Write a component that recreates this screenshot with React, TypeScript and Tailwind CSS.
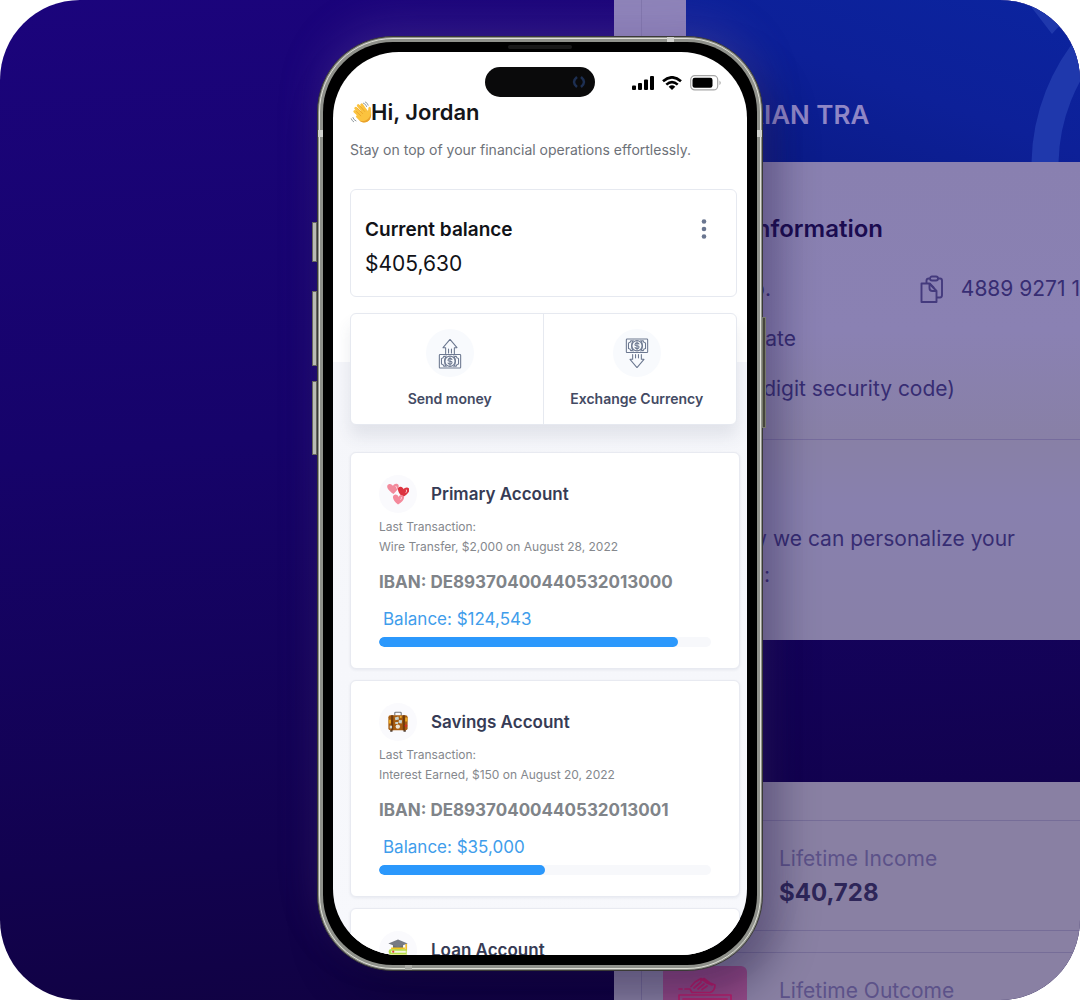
import React from "react";

function WaveIcon() {
  return (
    <svg viewBox="0 0 24 24" className="size-[23px] shrink-0" aria-hidden="true">
      <g fill="none" stroke="#8b959c" strokeWidth="1" strokeLinecap="round">
        <path d="M14 2.200q2.600.8 3.400 3.600M16 1q2.400 1 3 3.400M3 17.200q.8 2.600 3.200 3.600M1.300 18.600q.7 2.200 2.500 3.100" />
      </g>
      <path d="M6 7.500L12.800 14.500M8.600 4.800L14.800 12M12.200 4L16.800 10.500M5 11L11.500 17" stroke="#fbc33f" strokeWidth="3" strokeLinecap="round" />
      <path d="M10 10.500L16.500 8.500Q18.500 11 19 9.500C19 7 19.800 5.800 20.900 6.200C22.200 6.700 21.700 8.500 22 11.500C22.800 17.500 20.300 21.500 16 22.300C11.500 23 9 19.500 6 16.500Z" fill="#fbc33f" />
      <path d="M7.500 7.300L13.200 13.200M10.400 5.200L15.300 10.900M6.200 10.500L11.300 15.500" stroke="#e59a24" strokeWidth=".7" strokeLinecap="round" />
      <path d="M21.900 12.500C22.400 18 20 21.500 16 22.300C13 22.800 11 21.500 9.400 20C15 22.500 20.500 19.500 21.900 12.500Z" fill="#e9a12b" />
    </svg>
  );
}

const heart = "M0 2.800C-5-1-5-4-2.800-4.500C-1.400-4.800-.3-3.800 0-3C.3-3.800 1.400-4.800 2.800-4.500C5-4 5-1 0 2.800Z";

function HeartsIcon() {
  return (
    <svg viewBox="0 0 24 24" className="size-[22px]" aria-hidden="true">
      <path d={heart} transform="translate(6.800 7.800) rotate(-4) scale(1.500)" fill="#f28a9c" />
      <path d={heart} transform="translate(17.600 11.300) rotate(8) scale(1.500)" fill="#dc3440" />
      <path d={heart} transform="translate(12.300 19.500) rotate(4) scale(1.450)" fill="#f4899b" />
      <path d="M9.800 3.600q1 .7.700 2M21.300 7.600q.7 1.200-.5 2.700M15.800 15.600q.5 1-.7 2.300" fill="none" stroke="#ffe2e6" strokeWidth=".9" strokeLinecap="round" />
    </svg>
  );
}

function SuitcaseIcon() {
  return (
    <svg viewBox="0 0 24 24" className="size-[22px]" aria-hidden="true">
      <path d="M8.500 5V2.200Q8.500 1.300 9.500 1.300H14.500Q15.500 1.300 15.500 2.200V5" fill="none" stroke="#77787c" strokeWidth="1.200" />
      <path d="M3.500 20h2.500v2.700H3.500zM18 20h2.500v2.700H18z" fill="#4e4038" />
      <rect x="1.500" y="4.500" width="21" height="16.500" rx="2.200" fill="#a85d10" />
      <path d="M4.500 4.500h2.300V21H4.500zM17.200 4.500h2.300V21h-2.300z" fill="#6f3b0d" />
      <path d="M2 9.500h2.300v4H2zM19.800 7h2.400v4.500h-2.400z" fill="#eda923" />
      <path d="M8.500 7l4-1 .6 3.200-4 1zM13 9.800l3.500.3-.5 3.500-3.500-.5zM9 12h3v2.300H9z" fill="#c9d3cc" />
      <circle cx="11.800" cy="17" r="2.400" fill="#eee6d7" />
      <path d="M3 16h2.500v3H3z" fill="#cdd6d2" />
      <circle cx="20.700" cy="16" r="1.400" fill="#d52f25" />
      <path d="M14 5.500h2v2h-2z" fill="#f0ad27" />
    </svg>
  );
}

function GraduationIcon() {
  return (
    <svg viewBox="0 0 24 24" className="size-[22px]" aria-hidden="true">
      <path d="M6.500 5.500h11v5q-5.500 2-11 0z" fill="#6a6e76" />
      <path d="M12 .5L22.500 5L12 9L1.500 5Z" fill="#777b83" />
      <path d="M20 5.500h1.900v7.200H20z" fill="#f1bc31" />
      <path d="M4.500 9.200h15v2.300H4.500z" fill="#f1c51f" />
      <path d="M3 11.200h18.500v5.300H3q-2.500-2.600 0-5.300z" fill="#b4dd45" />
      <path d="M4.500 12.800h16v2.200h-16z" fill="#f4f5df" />
      <circle cx="6.800" cy="13.800" r="1.200" fill="#e24336" />
      <path d="M2 16.800h20v6H2z" fill="#d8e03a" />
    </svg>
  );
}

function MoneyIcon({ direction }: { direction: "up" | "down" }) {
  const up = direction === "up";
  return (
    <svg viewBox="0 0 24 32" className="h-[31px] w-6" fill="none" stroke="#6c7890" strokeWidth="1.100" strokeLinejoin="round" strokeLinecap="round" aria-hidden="true">
      <g transform={up ? "translate(0 17)" : "translate(0 1)"}>
        <rect x="1" y="0" width="22" height="14" rx=".8" />
        <path d="M7 2H5.500Q5.300 4 3.200 4.200V9.800Q5.300 10 5.500 12H7M17 2h1.500Q18.700 4 20.800 4.200V9.800Q18.700 10 18.500 12H17" />
        <path d="M8 1.500Q4.800 7 8 12.500M16 1.500Q19.200 7 16 12.500" />
        <circle cx="12" cy="7" r="5.300" />
        <path d="M14 5.200Q13.600 4 12 4T10 5.500T12 7T14 8.600T12 10T10 8.800M12 3V11" />
      </g>
      <path d={up ? "M7.500 16V10H4.800L12 1.500L19.200 10H16.500V16M10.500 11.500V15.500M13.500 11.500V15.500" : "M7.500 17V22H4.800L12 30.500L19.200 22H16.500V17M10.500 17V20.500M13.500 17V20.500"} />
    </svg>
  );
}

function CopyIcon() {
  return (
    <svg viewBox="0 0 24 28" className="h-7 w-6 shrink-0" fill="none" stroke="#443a7d" strokeWidth="1.900" strokeLinejoin="round" aria-hidden="true">
      <path d="M6.500 8V5.500Q6.500 3.500 9 3.500H9.500M18 3.500H20Q22 3.500 22 5.500V20Q22 22.500 20 22.500H17" />
      <rect x="10" y="1.500" width="8" height="4" rx="2" />
      <path d="M1.500 8.500H9.500L16.500 16V27H1.500Z" />
      <path d="M9.500 8.500V13Q9.500 16 12.500 16H16.500M9.500 8.500L14 13" />
    </svg>
  );
}

function HandCashIcon() {
  return (
    <svg viewBox="0 0 54 30" className="h-[30px] w-[54px]" fill="none" stroke="#ba1f6b" strokeWidth="1.700" strokeLinejoin="round" strokeLinecap="round" aria-hidden="true">
      <path d="M1 12H4M7 12H12L14 15.500H32Q37 14 37 8L32 6L26 1.500L23 3.500M13 9.500L17 5L23 1.500L29 6L34 8M16 11L23 5M20 12L26 7M24 12.500L29 9" />
      <path d="M1 18H53V29H1ZM5 22H49" />
    </svg>
  );
}

type Account = { name: string; last?: string; iban?: string; balance?: string; used?: number; icon: React.ReactNode };

const accounts: Account[] = [
  { name: "Primary Account", last: "Wire Transfer, $2,000 on August 28, 2022", iban: "DE89370400440532013000", balance: "$124,543", used: 90, icon: <HeartsIcon /> },
  { name: "Savings Account", last: "Interest Earned, $150 on August 20, 2022", iban: "DE89370400440532013001", balance: "$35,000", used: 50, icon: <SuitcaseIcon /> },
  { name: "Loan Account", icon: <GraduationIcon /> },
];

function AccountCard({ account }: { account: Account }) {
  return (
    <article className="shrink-0 rounded-md border border-[#e8eaf1] bg-white px-7 pt-[22px] pb-[21px] shadow-[0_1px_3px_rgba(40,50,90,0.08)]">
      <header className="flex items-center gap-3.5">
        <span className="flex size-[38px] items-center justify-center rounded-full bg-[#fafafd]">{account.icon}</span>
        <h2 className="text-[17px] leading-9 font-semibold text-[#363b55]">{account.name}</h2>
      </header>
      {account.iban && (
        <>
          <p className="mt-1 text-xs leading-5 text-[#85888d]">
            Last Transaction:
            <br />
            {account.last}
          </p>
          <p className="mt-[13px] text-[17px] leading-6 font-bold text-[#808489]">IBAN: {account.iban}</p>
          <p className="mt-[13px] pl-1 text-[17px] leading-6 text-[#409deb]">Balance: {account.balance}</p>
          <div role="progressbar" aria-label={account.name} aria-valuenow={account.used} className="mt-1.5 h-2.5 overflow-hidden rounded-full bg-[#f7f8fb]">
            <div className="h-full rounded-full bg-[#2b98fc]" style={{ width: `${account.used}%` }} />
          </div>
        </>
      )}
    </article>
  );
}

function StatusBar() {
  return (
    <div className="grid shrink-0 grid-cols-[1fr_110px_1fr] items-center">
      <span />
      <div className="flex h-[30px] items-center justify-end rounded-full bg-[#0a0a0b] pr-2">
        <svg viewBox="0 0 16 16" className="size-4" fill="none" stroke="#1d2f52" strokeWidth="2.500" aria-hidden="true">
          <path d="M6 3Q0 8 6 13M10 3Q16 8 10 13" />
        </svg>
      </div>
      <div className="flex items-center justify-end gap-2 pt-0.5 pr-[25px]">
        <svg viewBox="0 0 22 14" className="h-3.5 w-[22px]" aria-hidden="true">
          <rect x="0" y="9.500" width="4" height="4.500" rx="1" />
          <rect x="6" y="7" width="4" height="7" rx="1" />
          <rect x="12" y="3.500" width="4" height="10.500" rx="1" />
          <rect x="18" y="0" width="4" height="14" rx="1" />
        </svg>
        <svg viewBox="0 0 20 14" className="h-3.5 w-5" fill="none" stroke="#000" strokeWidth="2.600" aria-hidden="true">
          <path d="M1 5.300Q10-2.700 19 5.300M4.300 8.600Q10 3.500 15.700 8.600" />
          <path d="M6.700 10.700Q10 8 13.300 10.700L10 14Z" fill="#000" stroke="none" />
        </svg>
        <svg viewBox="0 0 32 16" className="h-4 w-8" aria-hidden="true">
          <rect x=".7" y=".7" width="27" height="14.200" rx="4" fill="none" stroke="#a6a6a6" strokeWidth="1.200" />
          <rect x="2.500" y="2.800" width="20" height="10" rx="2.200" />
          <path d="M29.500 5.500Q32 7.800 29.500 10.300Z" fill="#a6a6a6" />
        </svg>
      </div>
    </div>
  );
}

function Phone() {
  return (
    <main className="relative z-10 mx-auto flex h-full w-full max-w-[446px] flex-col rounded-[76px] border border-[#3a3a36] bg-[#8f918b] p-[5px] shadow-[0_-16px_44px_-6px_rgba(130,105,180,0.26),14px_24px_40px_rgba(10,0,40,0.35)] [grid-area:1/1]">
      <div className="absolute top-[185px] -left-1.5 h-10 w-[5px] border border-[#66665f] bg-[#b9bbb4]" />
      <div className="absolute top-[254px] -left-1.5 h-[75px] w-[5px] border border-[#66665f] bg-[#b9bbb4]" />
      <div className="absolute top-[344px] -left-1.5 h-[74px] w-[5px] border border-[#66665f] bg-[#b9bbb4]" />
      <div className="absolute top-[280px] -right-1 h-[111px] w-1 border border-[#77796c] bg-[#45453c]" />
      <div className="pointer-events-none absolute inset-px rounded-[74px] border border-[#e0e1d8]" />
      <div className="absolute top-[93px] left-0 h-[7px] w-[5px] bg-[#d0d1cd]" />
      <div className="absolute top-[93px] right-0 h-[7px] w-[5px] bg-[#d0d1cd]" />
      <div className="absolute top-0 right-[88px] h-[5px] w-[7px] bg-[#d0d1cd]" />
      <div className="absolute bottom-0 left-[87px] h-[5px] w-[7px] bg-[#a9aaa4]" />
      <div className="relative flex min-h-0 flex-1 flex-col rounded-[70px] bg-black px-2.5 pt-2.5 pb-2.5">
        <div className="absolute top-[3px] left-1/2 h-1 w-16 -translate-x-1/2 rounded-full bg-[#191919]" />
        <div className="flex min-h-0 flex-1 flex-col overflow-hidden rounded-[66px] bg-[linear-gradient(to_bottom,#ffffff_0,#ffffff_310px,#f5f6fa_310px,#f7f8fc_100%)] pt-[15px]">
          <StatusBar />
          <div className="px-[17px]">
            <h1 className="flex h-[30px] items-center text-[22px] font-semibold text-[#141519]">
              <span className="w-[21px]"><WaveIcon /></span>
              Hi, Jordan
            </h1>
            <p className="mt-[13px] text-sm leading-5 text-[#6d7178]">Stay on top of your financial operations effortlessly.</p>
          </div>
          <section className="mt-[29px] mr-2.5 ml-[17px] flex shrink-0 items-start justify-between rounded-md border border-[#e6e9f0] bg-white px-3.5 pt-6 pb-3.5">
            <div className="text-[#111217]">
              <h2 className="text-[19px] leading-8 font-semibold">Current balance</h2>
              <p className="text-[21px] leading-9">$405,630</p>
            </div>
            <button type="button" aria-label="Balance options" className="px-1.5 pt-[5px]">
              <svg viewBox="0 0 24 20" className="h-5 w-6" fill="#6a7690" aria-hidden="true">
                <circle cx="12" cy="2.500" r="2.300" />
                <circle cx="12" cy="10" r="2.300" />
                <circle cx="12" cy="17.500" r="2.300" />
              </svg>
            </button>
          </section>
          <section className="mt-4 mr-2.5 ml-[17px] grid shrink-0 grid-cols-2 divide-x divide-[#e6e9f0] rounded-md border border-[#e6e9f0] bg-white shadow-[0_12px_16px_rgba(60,70,100,0.1)]">
            <button type="button" className="flex flex-col items-center gap-2.5 pt-[15px] pb-[13px] pl-1.5 text-sm leading-6 font-semibold text-[#434a63]">
              <span className="flex size-12 items-center justify-center rounded-full bg-[#f8fafd]">
                <MoneyIcon direction="up" />
              </span>
              Send money
            </button>
            <button type="button" className="flex flex-col items-center gap-2.5 pt-[15px] pr-1.5 pb-[13px] text-sm leading-6 font-semibold text-[#434a63]">
              <span className="flex size-12 items-center justify-center rounded-full bg-[#f8fafd]">
                <MoneyIcon direction="down" />
              </span>
              Exchange Currency
            </button>
          </section>
          <section className="mt-[27px] mr-[7px] ml-[17px] flex flex-col gap-[11px]">
            {accounts.map((account) => (
              <AccountCard key={account.name} account={account} />
            ))}
          </section>
        </div>
      </div>
    </main>
  );
}

function Backdrop() {
  return (
    <aside className="-mt-9 -mb-[29px] ml-auto flex w-[466px] max-w-full flex-col overflow-hidden text-[#372d73] [grid-area:1/1]">
      <div className="flex h-[162px] shrink-0 bg-[#8e84b9]">
        <div className="w-7 border-r border-[#8177ac]" />
        <div className="relative ml-11 flex flex-1 items-start overflow-hidden bg-[linear-gradient(200deg,#0b249f,#0d2098_50%,#0a1a85)] pt-[97px] pl-[61px]">
          <svg viewBox="0 0 80 162" className="absolute top-0 right-0 h-full w-20" aria-hidden="true">
            <circle cx="235" cy="166" r="190" fill="none" stroke="#1f38ac" strokeWidth="27" />
            <path d="M32 8L52 34Q60 24 72 17V0H32Z" fill="#1f38ac" />
          </svg>
          <p className="text-[26px] leading-9 font-semibold text-[#8f86c6]">RIAN TRA</p>
        </div>
      </div>
      <div className="flex h-[478px] shrink-0 flex-col bg-[linear-gradient(to_bottom,#8980b0,#8a81b3_35%,#8880a6_58%,#8880ae_72%,#8880a8)] text-[21px]">
        <h2 className="mt-[47px] pr-[197px] text-right text-2xl leading-10 font-semibold text-[#1b0c50]">Information</h2>
        <div className="mt-5 flex h-10 items-center">
          <span className="w-[157px] text-right">No.</span>
          <span className="ml-auto flex items-center gap-[17px] whitespace-nowrap"><CopyIcon />4889 9271 1</span>
        </div>
        <p className="mt-2.5 pr-[284px] text-right leading-10">Date</p>
        <p className="mt-2.5 pr-[125px] text-right leading-10">digit security code)</p>
        <hr className="mt-[30px] border-[#766c9d]" />
        <p className="mt-[81px] pr-[65px] text-right leading-9">w we can personalize your</p>
        <p className="pr-[310px] text-right leading-9">:</p>
      </div>
      <div className="mt-[142px] flex min-h-0 flex-1 flex-col bg-[#8980a3] text-[#5c5289]">
        <hr className="mt-[38px] border-[#766d98]" />
        <div className="flex h-[109px] flex-col pt-5 pl-[165px]">
          <p className="text-[21px] leading-9">Lifetime Income</p>
          <p className="text-2xl leading-8 font-bold text-[#2e2659]">$40,728</p>
        </div>
        <hr className="border-[#766d98]" />
        <div className="mt-[21px] flex min-h-0 flex-1 border-t border-[#766d98]">
          <div className="w-7 border-r border-[#766d98]" />
          <div className="mt-[13px] ml-[21px] flex h-[84px] w-[84px] shrink-0 justify-center rounded-md bg-[#934a86] pt-[11px]">
            <HandCashIcon />
          </div>
          <p className="mt-5 ml-8 text-[21px] leading-9">Lifetime Outcome</p>
        </div>
      </div>
    </aside>
  );
}

export default function App() {
  return (
    <div className="grid h-screen grid-rows-[minmax(0,1fr)] overflow-hidden rounded-[80px] bg-[linear-gradient(175deg,#1b047c_0%,#16036a_42%,#12024f_80%,#10023f_100%)] pt-9 pb-[29px] font-['Inter',sans-serif]">
      <Backdrop />
      <Phone />
    </div>
  );
}
